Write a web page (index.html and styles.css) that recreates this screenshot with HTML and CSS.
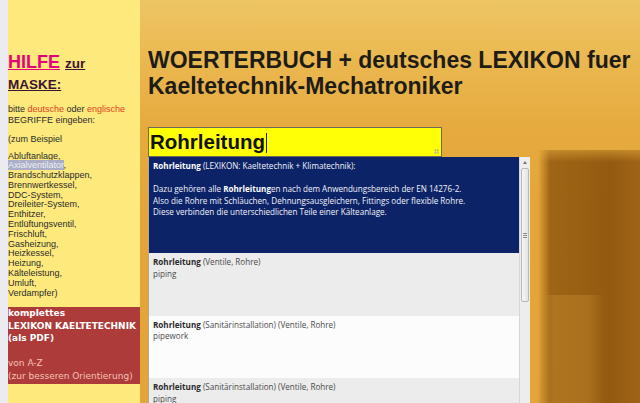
FILE: index.html
```html
<!DOCTYPE html>
<html lang="de">
<head>
<meta charset="utf-8">
<title>WOERTERBUCH + deutsches LEXIKON</title>
<link rel="stylesheet" href="styles.css">
</head>
<body>
<div class="page">
  <aside class="sidebar">
    <h2 class="help"><span class="hilfe">HILFE</span> <span class="zur">zur</span><br><span class="zur">MASKE:</span></h2>
    <p class="note">bitte <span class="lang">deutsche</span> oder <span class="lang">englische</span><br>BEGRIFFE eingeben:</p>
    <p class="note example">(zum Beispiel</p>
    <p class="note terms">Abluftanlage,<br><span class="sel">Axialventilator</span>,<br>Brandschutzklappen,<br>Brennwertkessel,<br>DDC-System,<br>Dreileiter-System,<br>Enthitzer,<br>Entlüftungsventil,<br>Frischluft,<br>Gasheizung,<br>Heizkessel,<br>Heizung,<br>Kälteleistung,<br>Umluft,<br>Verdampfer)</p>
    <div class="pdf">
      <strong>komplettes<br>LEXIKON KAELTETECHNIK<br>(als PDF)</strong><br><br>
      <span class="pdf-sub">von A-Z<br>(zur besseren Orientierung)</span>
    </div>
  </aside>
  <main class="main">
    <h1 class="title">WOERTERBUCH + deutsches LEXIKON fuer<br>Kaeltetechnik-Mechatroniker</h1>
    <div class="search">Rohrleitung<span class="caret"></span><span class="grip"></span></div>
    <div class="dropdown">
      <ul class="items">
        <li class="item active">
          <b>Rohrleitung</b> (LEXIKON: Kaeltetechnik + Klimatechnik):<br><br>
          Dazu gehören alle <b>Rohrleitung</b>en nach dem Anwendungsbereich der EN 14276-2.<br>
          Also die Rohre mit Schläuchen, Dehnungsausgleichern, Fittings oder flexible Rohre.<br>
          Diese verbinden die unterschiedlichen Teile einer Kälteanlage.
        </li>
        <li class="item grey"><b>Rohrleitung</b> (Ventile, Rohre)<br>piping</li>
        <li class="item"><b>Rohrleitung</b> (Sanitärinstallation) (Ventile, Rohre)<br>pipework</li>
        <li class="item grey"><b>Rohrleitung</b> (Sanitärinstallation) (Ventile, Rohre)<br>piping</li>
      </ul>
      <div class="scrollbar">
        <div class="arrow"></div>
        <div class="thumb"><span></span><span></span><span></span></div>
      </div>
    </div>
  </main>
</div>
</body>
</html>
```

FILE: styles.css
```css
html, body {
  margin: 0;
  height: 403px;
  overflow: hidden;
}
body {
  background: #ececf0;
  font-family: "Liberation Sans", Arial, sans-serif;
}
.page {
  display: flex;
  height: 403px;
  padding-left: 8px;
}
.sidebar {
  flex: none;
  width: 132px;
  box-sizing: border-box;
  padding-top: 53px;
  background: #fee97d;
  color: #2b2b2b;
}
.help {
  margin: 0;
  font-size: 18px;
  line-height: 18.5px;
  font-weight: 700;
}
.hilfe {
  color: #e6007c;
  font-weight: 900;
  text-decoration: underline;
}
.zur {
  color: #3a1432;
  font-size: 13.5px;
  text-decoration: underline;
}
.note {
  margin: 10px 0 0;
  font-size: 9px;
  line-height: 10.5px;
}
.lang {
  color: #e2431c;
}
.example {
  margin-top: 9px;
}
.terms {
  margin-top: 7px;
  line-height: 9.8px;
}
.sel {
  background: #a9aec6;
  color: #eef0f6;
}
.pdf {
  margin-top: 9px;
  padding: 0 0 2px;
  background: #ad3b3a;
  color: #fff;
  font-family: "DejaVu Sans", Verdana, sans-serif;
  font-size: 9px;
  line-height: 12.5px;
}
.pdf-sub {
  color: #f4c4b4;
}
.main {
  flex: 1;
  padding: 47px 0 0 8px;
  background:
    linear-gradient(180deg, #e5a93d 0, rgba(229,169,61,0) 100%) 396px 140px / 104px 22px no-repeat,
    linear-gradient(90deg, rgba(212,152,56,0), rgba(206,146,52,0.35) 25%, rgba(206,146,52,0.35) 75%, rgba(212,152,56,0)) 398px 295px / 66px 110px no-repeat,
    linear-gradient(90deg, rgba(150,92,16,0) 398px, rgba(150,92,16,0.88) 410px, rgba(140,84,12,0.92) 470px, rgba(150,90,16,0.88) 500px) 0 150px / 100% 260px no-repeat,
    linear-gradient(180deg, #eec564 0, #eab850 60px, #e6aa3e 130px, #e4a63a 200px, #e3a43a 100%);
}
.title {
  margin: 0;
  white-space: nowrap;
  font-size: 23px;
  line-height: 26px;
  font-weight: bold;
  color: #1e1c18;
}
.search {
  position: relative;
  margin-top: 28px;
  width: 294px;
  height: 30px;
  box-sizing: border-box;
  border: 1px solid #6d6a55;
  background: #ffff06;
  padding-left: 1px;
  font-size: 20.5px;
  font-weight: bold;
  line-height: 28px;
  color: #111;
}
.caret {
  display: inline-block;
  width: 1px;
  height: 20px;
  margin-left: 1px;
  vertical-align: -4px;
  background: #222;
}
.grip {
  position: absolute;
  right: 2px;
  bottom: 2px;
  width: 5px;
  height: 5px;
  background: radial-gradient(circle, #b9b58a 0.8px, transparent 1px) 0 0 / 2.5px 2.5px;
}
.dropdown {
  display: flex;
  width: 382px;
  height: 260px;
  box-sizing: border-box;
  border-left: 1px solid #b0a890;
  overflow: hidden;
  font-family: "Open Sans", "Noto Sans", sans-serif;
  font-size: 8.1px;
  line-height: 11.5px;
}
.items {
  flex: 1;
  margin: 0;
  padding: 0;
  list-style: none;
}
.item {
  height: 62.5px;
  box-sizing: border-box;
  padding: 3px 4px;
  background: #fcfcfc;
  color: #4a4a4a;
}
.item b {
  color: #2a2a2a;
}
.item.grey {
  background: #ececec;
}
.item.active {
  height: 96px;
  background: #0c2367;
  color: #f2f4fa;
}
.item.active b {
  color: #fff;
}
.scrollbar {
  flex: none;
  width: 11px;
  box-sizing: border-box;
  border-left: 1px solid #d6d6d6;
  background: #ededed;
  padding-top: 2px;
}
.arrow {
  width: 0;
  height: 0;
  margin: 2px auto 4px;
  border-left: 2.5px solid transparent;
  border-right: 2.5px solid transparent;
  border-bottom: 3px solid #777;
}
.thumb {
  display: flex;
  flex-direction: column;
  align-items: center;
  justify-content: center;
  gap: 1px;
  width: 8px;
  height: 134px;
  margin-left: 1px;
  box-sizing: border-box;
  border: 1px solid #b8b8b8;
  border-radius: 2px;
  background: linear-gradient(90deg, #f6f6f6, #e4e4e4);
}
.thumb span {
  width: 4px;
  height: 1px;
  background: #8a8a8a;
}
```
